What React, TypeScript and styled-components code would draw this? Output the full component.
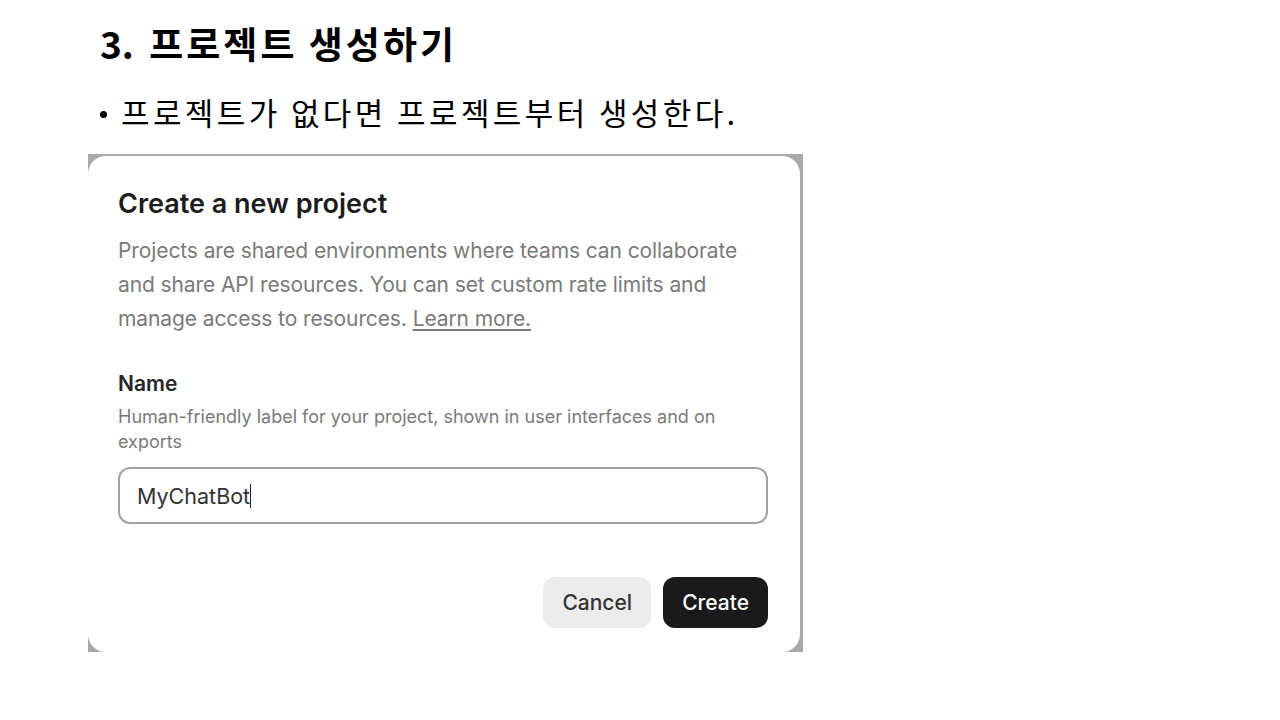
import styled, { createGlobalStyle } from "styled-components";

const GlobalStyle = createGlobalStyle`
  html, body {
    margin: 0;
    padding: 0;
    background: #ffffff;
  }
`;

const Page = styled.div`
  width: 1280px;
  height: 720px;
  padding: 17px 0 0 100px;
  box-sizing: border-box;
  font-family: "Noto Sans CJK KR", "Noto Sans", sans-serif;
  color: #000;
`;

const Heading = styled.h1`
  margin: 0;
  font-size: 37px;
  font-weight: 700;
  line-height: 52px;
  letter-spacing: 3px;
`;

const Num = styled.span`
  letter-spacing: 0;
  margin-right: 4px;
`;

const Bullet = styled.div`
  display: flex;
  align-items: center;
  gap: 14px;
  margin-top: 21px;
  font-size: 31px;
  line-height: 44px;
  letter-spacing: 3.4px;
  &::before {
    content: "";
    width: 7px;
    height: 7px;
    border-radius: 50%;
    background: #000;
    margin-top: 4px;
  }
`;

const Shot = styled.div`
  margin: 20px 0 0 -12px;
  width: 715px;
  height: 498px;
  background: #a9a9a9;
  padding: 2px 3px 0 0;
  box-sizing: border-box;
  display: flex;
`;

const Card = styled.div`
  flex: 1;
  background: #fff;
  border-radius: 18px;
  padding: 31px 32px 0 30px;
  font-family: Inter, "Liberation Sans", sans-serif;
  display: flex;
  flex-direction: column;
`;

const Title = styled.div`
  font-size: 27px;
  font-weight: 600;
  color: #1c1c1c;
  line-height: 34px;
  letter-spacing: 0;
`;

const Desc = styled.p`
  margin: 13px 0 0;
  max-width: 636px;
  font-size: 21px;
  line-height: 34px;
  color: #7a7a7a;
  letter-spacing: -0.1px;
`;

const LinkText = styled.span`
  text-decoration: underline;
  text-underline-offset: 3px;
`;

const Label = styled.div`
  margin-top: 34px;
  font-size: 21px;
  font-weight: 600;
  color: #262626;
  line-height: 28px;
`;

const Hint = styled.div`
  margin-top: 6px;
  font-size: 18px;
  line-height: 25px;
  color: #7a7a7a;
  padding-right: 20px;
`;

const Field = styled.div`
  margin-top: 13px;
  height: 57px;
  border: 2px solid #a3a3a3;
  border-radius: 12px;
  box-sizing: border-box;
  display: flex;
  align-items: center;
  padding-left: 17px;
  font-size: 21.5px;
  color: #333;
`;

const Caret = styled.span`
  display: inline-block;
  width: 1px;
  height: 24px;
  background: #222;
  vertical-align: middle;
`;

const Actions = styled.div`
  margin-top: 53px;
  display: flex;
  justify-content: flex-end;
  gap: 12px;
`;

const Button = styled.button<{ $primary?: boolean }>`
  height: 51px;
  padding: 0 19px;
  border: none;
  border-radius: 12px;
  font-family: Inter, "Liberation Sans", sans-serif;
  font-size: 21px;
  font-weight: 500;
  background: ${(p) => (p.$primary ? "#1a1a1a" : "#ececec")};
  color: ${(p) => (p.$primary ? "#ffffff" : "#333333")};
`;

export default function App() {
  return (
    <Page>
      <GlobalStyle />
      <Heading>
        <Num>3.</Num> 프로젝트 생성하기
      </Heading>
      <Bullet>프로젝트가 없다면 프로젝트부터 생성한다.</Bullet>
      <Shot>
        <Card>
          <Title>Create a new project</Title>
          <Desc>
            Projects are shared environments where teams can collaborate and
            share API resources. You can set custom rate limits and manage
            access to resources. <LinkText>Learn more.</LinkText>
          </Desc>
          <Label>Name</Label>
          <Hint>
            Human-friendly label for your project, shown in user interfaces and
            on exports
          </Hint>
          <Field>
            MyChatBot
            <Caret />
          </Field>
          <Actions>
            <Button>Cancel</Button>
            <Button $primary>Create</Button>
          </Actions>
        </Card>
      </Shot>
    </Page>
  );
}
